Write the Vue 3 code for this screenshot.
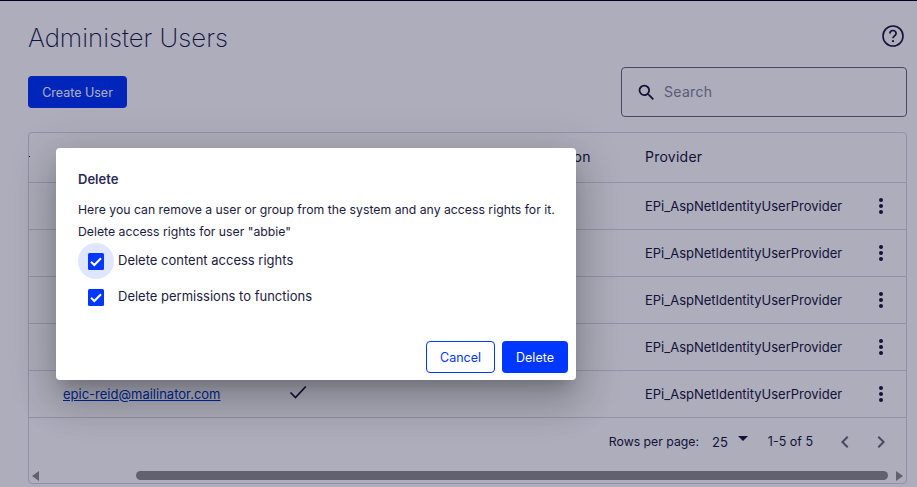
<script setup>
const rows = [
  { id: 1, email: '', confirmed: false },
  { id: 2, email: '', confirmed: false },
  { id: 3, email: '', confirmed: false },
  { id: 4, email: '', confirmed: false },
  { id: 5, email: 'epic-reid@mailinator.com', confirmed: true }
]
const options = ['Delete content access rights', 'Delete permissions to functions']
</script>

<template>
  <div class="page">
    <header class="title-row">
      <h1>Administer Users</h1>
      <svg class="help" width="24" height="24" viewBox="0 0 24 24" fill="none" stroke="#1a1a40">
        <circle cx="12" cy="12" r="10" stroke-width="1.6" />
        <path d="M8.9 9.6a3.1 3.1 0 0 1 6.2 0c0 2.2-3.1 2.4-3.1 4.6" stroke-width="1.7" />
        <circle cx="12" cy="17.2" r="1.1" fill="#1a1a40" stroke="none" />
      </svg>
    </header>

    <div class="toolbar">
      <button class="btn primary create">Create User</button>
      <label class="search">
        <svg width="21" height="21" viewBox="0 0 24 24" fill="#1a1a40">
          <path d="M15.5 14h-.79l-.28-.27A6.47 6.47 0 0 0 16 9.5 6.5 6.5 0 1 0 9.5 16c1.61 0 3.09-.59 4.23-1.57l.27.28v.79l5 4.99L20.49 19l-4.99-5zm-6 0C7.01 14 5 11.99 5 9.5S7.01 5 9.5 5 14 7.01 14 9.5 11.99 14 9.5 14z" />
        </svg>
        <span class="search-text">Search</span>
      </label>
    </div>

    <section class="table">
      <div class="row head">
        <span class="sort-mark"></span>
        <span></span>
        <span></span>
        <span class="confirm">Confirmation</span>
        <span>Provider</span>
        <span></span>
      </div>
      <div v-for="r in rows" :key="r.id" class="row body">
        <span class="sort-spacer"></span>
        <a v-if="r.email" class="email">{{ r.email }}</a><span v-else></span>
        <span class="check-cell">
          <svg v-if="r.confirmed" width="24" height="24" viewBox="0 0 24 24" fill="none" stroke="#1a1a40" stroke-width="1.7">
            <path d="M4.5 11.5 9.5 16.5 19.8 5.5" />
          </svg>
        </span>
        <span></span>
        <span class="provider">EPi_AspNetIdentityUserProvider</span>
        <svg class="kebab" width="24" height="24" viewBox="0 0 24 24" fill="#1a1a40">
          <circle cx="12" cy="6" r="2" /><circle cx="12" cy="12" r="2" /><circle cx="12" cy="18" r="2" />
        </svg>
      </div>
      <div class="pager">
        <span class="rpp">Rows per page:</span>
        <span class="size">25</span>
        <svg class="caret" width="12" height="6" viewBox="0 0 12 6" fill="#1a1a40"><path d="M1 0h10L6 5z" /></svg>
        <span class="range">1-5 of 5</span>
        <svg class="nav" width="24" height="24" viewBox="0 0 24 24" fill="#6b6b80"><path d="M15.41 7.41 14 6l-6 6 6 6 1.41-1.41L10.83 12z" /></svg>
        <svg class="nav next" width="24" height="24" viewBox="0 0 24 24" fill="#6b6b80"><path d="M10 6 8.59 7.41 13.17 12l-4.58 4.59L10 18l6-6z" /></svg>
      </div>
      <div class="scrollbar">
        <i class="arrow left"></i>
        <div class="track"><div class="thumb"></div></div>
        <i class="arrow right"></i>
      </div>
    </section>

    <div class="overlay"></div>

    <div class="dialog">
      <h2>Delete</h2>
      <p class="first">Here you can remove a user or group from the system and any access rights for it.</p>
      <p class="second">Delete access rights for user "abbie"</p>
      <div class="options">
        <label v-for="(o, i) in options" :key="o" class="option">
          <span class="box-wrap" :class="{ focused: i === 0 }">
            <svg width="16" height="17" viewBox="0 0 16 17">
              <rect width="16" height="17" rx="1.5" fill="#0037ff" />
              <path d="M3 8.8 6.3 12 13 5.2" fill="none" stroke="#fff" stroke-width="2" />
            </svg>
          </span>
          <span class="option-text">{{ o }}</span>
        </label>
      </div>
      <div class="actions">
        <button class="btn outline">Cancel</button>
        <button class="btn primary">Delete</button>
      </div>
    </div>
  </div>
</template>

<style>
html, body { margin: 0; background: #fff; overflow: hidden; }
</style>

<style scoped>
.page {
  position: relative;
  width: 917px;
  height: 487px;
  box-sizing: border-box;
  overflow: hidden;
  padding: 1px 10px 0 28px;
  border-top: 1px solid #00002c;
  font-family: Inter, "Liberation Sans", sans-serif;
  color: #1a1a40;
  font-size: 14px;
}
.title-row {
  display: flex;
  justify-content: space-between;
  align-items: center;
  height: 40px;
  margin-top: 16px;
}
h1 { margin: 0; font-size: 25.75px; font-weight: 200; line-height: 40px; color: #1a1a4b; }
.help { margin-top: -4px; margin-right: 2px; }
.toolbar {
  display: flex;
  justify-content: space-between;
  align-items: flex-start;
  margin-top: 9px;
}
.btn {
  font: inherit;
  font-size: 12.5px;
  height: 32px;
  border-radius: 4px;
  box-sizing: border-box;
  cursor: pointer;
}
.primary { background: #0037ff; color: #fff; border: none; padding: 0 14px; }
.outline { background: #fff; color: #0037ff; border: 1px solid #0037ff; padding: 0 14px; }
.create { width: 99px; margin-top: 9px; padding: 0; }
.search {
  width: 286px;
  height: 50px;
  box-sizing: border-box;
  border: 1px solid #6a6a85;
  border-radius: 4px;
  display: flex;
  align-items: center;
  gap: 7px;
  padding-left: 14px;
  color: #8686a0;
  font-size: 14px;
  letter-spacing: .3px;
}
.search-text { padding-bottom: 1px; }
.table {
  margin-top: 15px;
  border: 1px solid #d8d8e2;
  border-radius: 4px;
  height: 352px;
  box-sizing: border-box;
  display: flex;
  flex-direction: column;
}
.row {
  display: grid;
  grid-template-columns: 34px 222px 217px 143px 232px 24px;
  align-items: center;
  border-bottom: 1px solid #d8d8e2;
  box-sizing: border-box;
  flex: none;
}
.head { height: 50px; padding-bottom: 2px; letter-spacing: .25px; }
.body { height: 47px; }
.confirm { white-space: nowrap; }
.sort-mark { width: 1px; height: 1px; background: #1a1a40; }
.email { color: #0037c0; text-decoration: underline; font-size: 13px; white-space: nowrap; padding-bottom: 1px; }
.check-cell { display: flex; }
.check-cell svg { margin-left: 1px; margin-top: -2px; }
.provider { font-size: 13px; white-space: nowrap; padding-bottom: 1px; }
.kebab { margin-left: -8px; }
.pager {
  height: 47px;
  flex: none;
  display: flex;
  align-items: center;
  justify-content: flex-end;
  padding-right: 13px;
  font-size: 12.5px;
}
.rpp { font-size: 12.25px; }
.size { margin-left: 13px; font-size: 13px; }
.caret { margin-left: 9px; margin-top: -6px; }
.range { margin-left: 19px; }
.nav { margin-left: 20px; }
.nav.next { margin-left: 12px; }
.scrollbar {
  display: flex;
  align-items: center;
  height: 18px;
  box-sizing: border-box;
  padding: 3px 3px 0;
  gap: 3px;
  flex: none;
}
.arrow { width: 0; height: 0; border-style: solid; border-color: transparent; }
.arrow.left { border-width: 5px 7px 5px 0; border-right-color: #908f90; }
.arrow.right { border-width: 5px 0 5px 7px; border-left-color: #908f90; }
.track { flex: 1; height: 9px; padding-left: 94px; padding-right: 5px; }
.thumb { height: 9px; border-radius: 5px; background: #908f90; }
.overlay {
  position: absolute;
  inset: -1px 0 0 0;
  background: rgba(0, 0, 44, .32);
}
.dialog {
  position: absolute;
  left: 56px;
  top: 147px;
  width: 520px;
  height: 232px;
  box-sizing: border-box;
  background: #fff;
  border-radius: 4px;
  padding: 23px 8px 7px 22px;
  display: flex;
  flex-direction: column;
  font-size: 12.25px;
  box-shadow: 0 11px 15px -7px rgba(0,0,0,.2), 0 24px 38px 3px rgba(0,0,0,.14), 0 9px 46px 8px rgba(0,0,0,.12);
}
h2 { margin: 0; font-size: 13px; font-weight: 600; line-height: 16px; color: #2b2b52; }
p { margin: 0; line-height: 16px; white-space: nowrap; }
.first { margin-top: 15px; }
.second { margin-top: 6px; }
.options { display: flex; flex-direction: column; margin-top: 3px; }
.option { display: flex; align-items: center; height: 36px; font-size: 13px; }
.option-text { padding-bottom: 2px; }
.box-wrap {
  width: 36px;
  height: 36px;
  border-radius: 50%;
  display: flex;
  align-items: center;
  justify-content: center;
  margin-right: 4px;
}
.box-wrap.focused { background: #e0e6ff; }
.actions {
  margin-top: auto;
  display: flex;
  justify-content: flex-end;
  gap: 7px;
}
.actions .outline { width: 69px; padding: 0; }
.actions .primary { width: 66px; padding: 0; }
</style>
